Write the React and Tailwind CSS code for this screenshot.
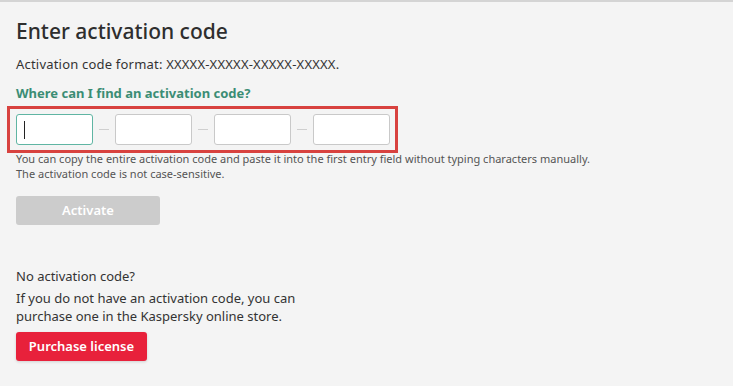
import React from 'react';

const font = { fontFamily: '"Segoe UI", "Noto Sans", sans-serif' };

// One segment of the activation code entry
const CodeField = ({ active }) => (
  <div
    className={`relative h-[31px] w-[77px] shrink-0 rounded-[3px] bg-white border ${
      active ? 'border-[#5fb5a3]' : 'border-[#c9c9c9]'
    }`}
  >
    {active && <span className="absolute left-[7px] top-[6px] h-[18px] w-px bg-[#222]" />}
  </div>
);

const Dash = () => (
  <div className="flex w-[22px] shrink-0 items-center justify-center">
    <span className="block h-px w-[10px] bg-[#cfcfcf]" />
  </div>
);

export default function App() {
  return (
    <div
      className="h-[386px] w-[733px] overflow-hidden border-t-2 border-[#d4d4d4] bg-[#f4f4f4] text-[#333]"
      style={font}
    >
      <div className="pl-4 pt-[15px]">
        <h1 className="text-[21px] leading-[28px] font-medium text-[#2e2e2e]">Enter activation code</h1>
        <p className="mt-[10px] text-[13px] leading-[18px] tracking-[0.2px]">
          Activation code format: XXXXX-XXXXX-XXXXX-XXXXX.
        </p>
        <p className="mt-[11px] text-[13px] leading-[18px] font-bold text-[#3b8d74]">
          Where can I find an activation code?
        </p>

        <div className="-ml-[9px] mt-[4px] flex w-[391px] border-[3px] border-[#d8423f] pl-[6px] pt-[5px] pb-[5px]">
          <CodeField active />
          <Dash />
          <CodeField />
          <Dash />
          <CodeField />
          <Dash />
          <CodeField />
        </div>

        <div className="-mt-[2px] text-[11px] leading-[15px] text-[#555]">
          <p>You can copy the entire activation code and paste it into the first entry field without typing characters manually.</p>
          <p>The activation code is not case-sensitive.</p>
        </div>

        <button className="mt-[15px] h-[29px] w-[144px] rounded-[3px] bg-[#cccccc] text-[13px] font-semibold text-white">
          Activate
        </button>

        <p className="mt-[42px] text-[13px] leading-[18px]">No activation code?</p>
        <p className="mt-[4px] w-[300px] text-[13px] leading-[18px]">
          If you do not have an activation code, you can purchase one in the Kaspersky online store.
        </p>

        <button className="mt-[7px] h-[29px] w-[131px] rounded-[3px] bg-[#e8213b] text-[13px] font-semibold text-white shadow-[0_1px_3px_rgba(0,0,0,0.15)]">
          Purchase license
        </button>
      </div>
    </div>
  );
}
